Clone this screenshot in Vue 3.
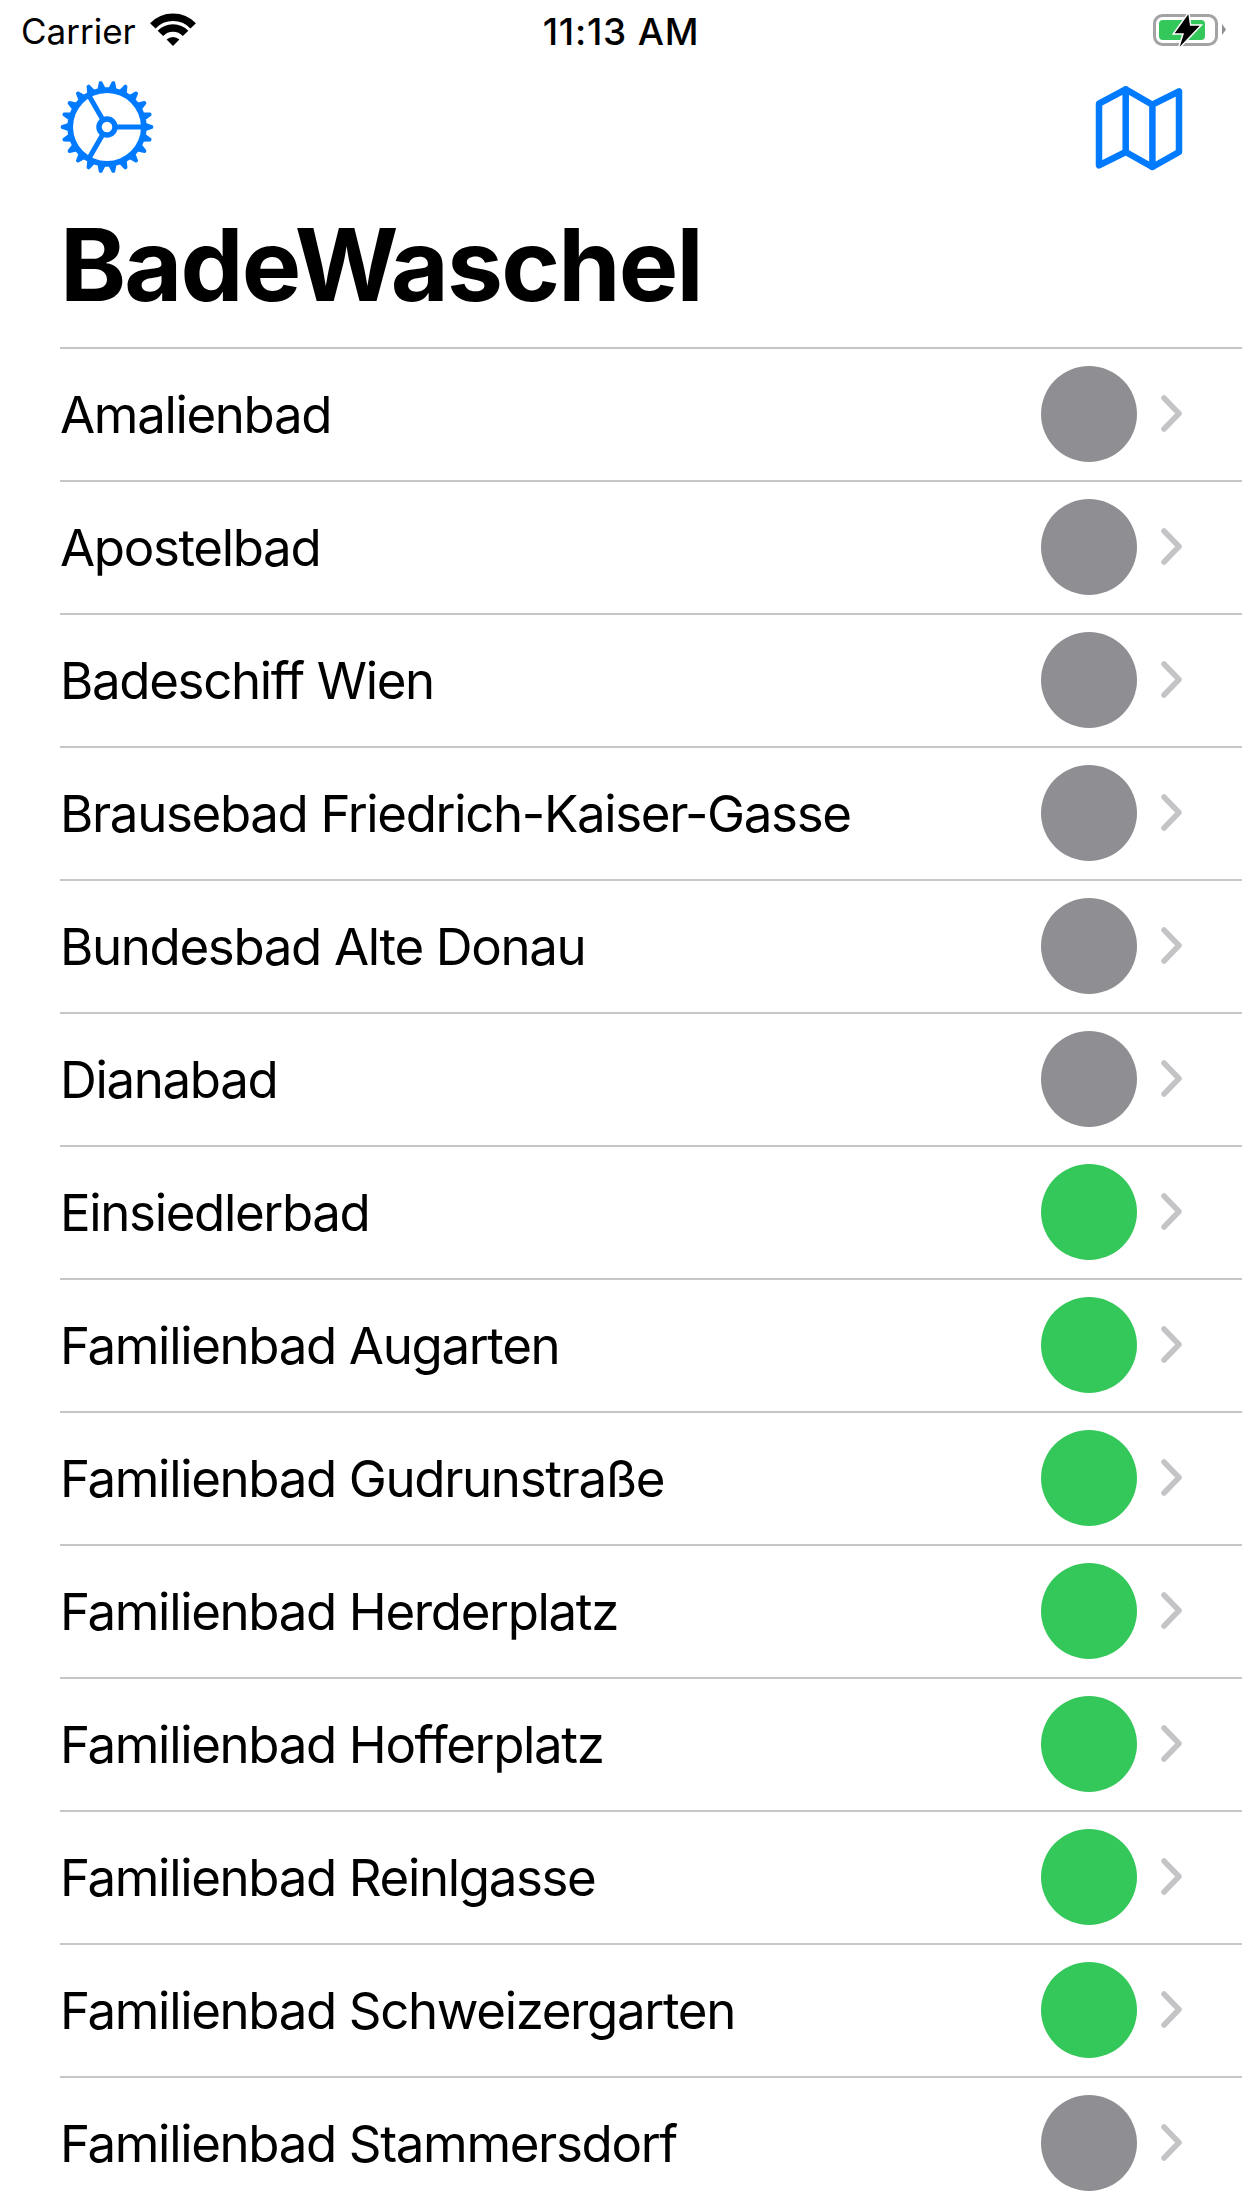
<script setup>
const baths = [
  { name: 'Amalienbad', open: false },
  { name: 'Apostelbad', open: false },
  { name: 'Badeschiff Wien', open: false },
  { name: 'Brausebad Friedrich-Kaiser-Gasse', open: false },
  { name: 'Bundesbad Alte Donau', open: false },
  { name: 'Dianabad', open: false },
  { name: 'Einsiedlerbad', open: true },
  { name: 'Familienbad Augarten', open: true },
  { name: 'Familienbad Gudrunstraße', open: true },
  { name: 'Familienbad Herderplatz', open: true },
  { name: 'Familienbad Hofferplatz', open: true },
  { name: 'Familienbad Reinlgasse', open: true },
  { name: 'Familienbad Schweizergarten', open: true },
  { name: 'Familienbad Stammersdorf', open: false }
];

// gear outline with 22 small teeth, one of them pointing straight right
const teeth = 22;
const point = (r, deg) => {
  const a = (deg * Math.PI) / 180;
  return `${(50 + r * Math.cos(a)).toFixed(2)} ${(50 + r * Math.sin(a)).toFixed(2)}`;
};
let gearPath = '';
for (let i = 0; i < teeth; i++) {
  const step = 360 / teeth;
  const c = i * step;
  gearPath += `${i === 0 ? 'M' : 'L'}${point(38.5, c - step * 0.26)} L${point(45, c - step * 0.04)} L${point(45, c + step * 0.04)} L${point(38.5, c + step * 0.26)} `;
}
gearPath += 'Z';
</script>

<template>
  <div class="screen">
    <div class="status-bar">
      <div class="status-left">
        <span>Carrier</span>
        <svg class="wifi" width="46" height="34" viewBox="0 0 46 34">
          <path d="M23 33 L16.6 26.6 A9 9 0 0 1 29.4 26.6 Z" fill="#000" />
          <path d="M10.4 20.4 A17.4 17.4 0 0 1 35.6 20.4" fill="none" stroke="#000" stroke-width="7.6" />
          <path d="M2.8 12.8 A28 28 0 0 1 43.2 12.8" fill="none" stroke="#000" stroke-width="7.6" />
        </svg>
      </div>
      <span class="time">11:13 AM</span>
      <div class="status-right">
        <svg class="battery" width="74" height="36" viewBox="0 0 74 36">
          <rect x="1.5" y="2.5" width="62" height="29" rx="8" fill="none" stroke="#a3a3a6" stroke-width="3" />
          <rect x="6" y="7" width="46" height="20" rx="4" fill="#34c759" />
          <path d="M69 11 L73 16.5 L69 22 Z" fill="#8e8e93" />
          <path d="M35.3 1.3 L21.7 20.3 L31 20.3 L26.7 33.7 L46.7 12.7 L37 12.7 Z" fill="#000" stroke="#fff" stroke-width="3" stroke-linejoin="miter" paint-order="stroke" />
        </svg>
      </div>
    </div>

    <div class="toolbar">
      <svg class="gear" width="100" height="100" viewBox="0 0 100 100">
        <path :d="gearPath" fill="#007aff" stroke="#007aff" stroke-width="2.5" stroke-linejoin="round" />
        <circle cx="50" cy="50" r="34" fill="#fff" />
        <g stroke="#007aff" stroke-width="5">
          <line x1="50" y1="50" x2="86" y2="50" />
          <line x1="50" y1="50" x2="32" y2="18.8" />
          <line x1="50" y1="50" x2="32" y2="81.2" />
        </g>
        <circle cx="50" cy="50" r="8" fill="#fff" stroke="#007aff" stroke-width="5.5" />
      </svg>
      <svg class="map" width="92" height="90" viewBox="0 0 92 90">
        <path
          d="M5 21.7 L31.7 7.3 L58.4 22.7 L85 9.3 L85 70 L58.4 85 L31.7 70 L5 83.3 Z M31.7 7.3 L31.7 70 M58.4 22.7 L58.4 85"
          fill="none" stroke="#007aff" stroke-width="6.5" stroke-linejoin="round" stroke-linecap="round"
        />
      </svg>
    </div>

    <h1 class="title">BadeWaschel</h1>

    <ul class="list">
      <li v-for="bath in baths" :key="bath.name" class="row">
        <span class="name">{{ bath.name }}</span>
        <span class="dot" :class="{ open: bath.open }"></span>
        <svg class="chevron" width="21" height="37" viewBox="0 0 21 37">
          <path d="M3 3 L18 18.5 L3 34" fill="none" stroke="#c4c4c7" stroke-width="5.5" stroke-linecap="round" stroke-linejoin="round" />
        </svg>
      </li>
    </ul>
  </div>
</template>

<style scoped>
.screen {
  width: 1242px;
  height: 2208px;
  overflow: hidden;
  background: #fff;
  color: #000;
  font-family: Inter, "Liberation Sans", sans-serif;
}

.status-bar {
  display: grid;
  grid-template-columns: 1fr auto 1fr;
  align-items: center;
  height: 62px;
  padding: 0 21px;
  font-size: 35px;
}

.status-left {
  display: flex;
  align-items: center;
  gap: 14px;
}

.wifi {
  margin-top: -2px;
}

.time {
  font-size: 37px;
  font-weight: 500;
  letter-spacing: 0.8px;
}

.status-right {
  display: flex;
  justify-content: flex-end;
}

.battery {
  margin-right: -6px;
}

.toolbar {
  display: flex;
  justify-content: space-between;
  align-items: center;
  height: 129px;
  padding: 0 56px 0 57px;
}

.title {
  margin: 0;
  height: 156px;
  padding: 14px 0 0 60px;
  box-sizing: border-box;
  font-size: 100px;
  line-height: 120px;
  font-weight: 700;
  letter-spacing: -1.8px;
}

.list {
  margin: 0;
  padding: 0 0 0 60px;
  list-style: none;
}

.row {
  display: flex;
  align-items: center;
  height: 133px;
  box-sizing: border-box;
  border-top: 2px solid #c6c6c8;
  padding: 0 60px 2px 0;
}

.name {
  flex: 1;
  padding-top: 2px;
  font-size: 51px;
  letter-spacing: -1.35px;
}

.dot {
  width: 96px;
  height: 96px;
  border-radius: 50%;
  background: #8e8e93;
  margin-right: 24px;
}

.dot.open {
  background: #34c759;
}
</style>

<style>
html,
body {
  margin: 0;
  background: #fff;
}
</style>
